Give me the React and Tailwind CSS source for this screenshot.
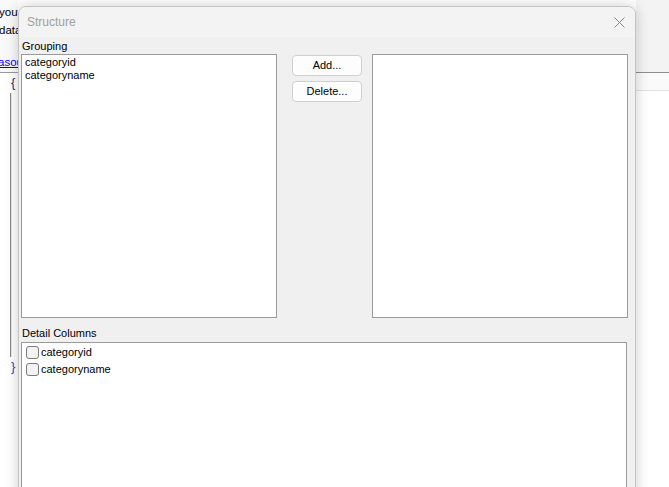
import React from 'react'

const font = { fontFamily: '"Liberation Sans", Arial, sans-serif' }

function ListBox({ className, children }) {
  return (
    <div className={`bg-white border border-[#9a9a9a] flex-shrink-0 ${className}`}>
      {children}
    </div>
  )
}

function Button({ children }) {
  return (
    <button className="w-[70px] h-[21px] rounded-[4px] border border-[#d0d0d0] bg-[#fdfdfd] text-[11px] leading-none text-black flex items-center justify-center">
      {children}
    </button>
  )
}

function Check({ label }) {
  return (
    <div className="h-[17px] flex items-center">
      <span className="w-[13px] h-[13px] rounded-[3px] border border-[#7a7a7a] bg-[#f3f3f3] flex-shrink-0" />
      <span className="ml-[2px] text-[11px] leading-none text-black">{label}</span>
    </div>
  )
}

function BackLeft() {
  return (
    <div className="w-[18px] flex-shrink-0 bg-white overflow-hidden text-[11.5px] text-black">
      <div className="h-[73px] border-b border-[#9a9a9a] bg-[#f9f9f9] pt-[3px] whitespace-nowrap">
        <div className="h-[18px] leading-[18px] -ml-[1px]">yout</div>
        <div className="h-[19px] leading-[19px] -ml-[1px]">data</div>
        <div className="h-[18px] leading-[18px] mt-[13px] -ml-[2px] text-[#0000ee] underline">asou</div>
      </div>
      <div className="pl-[11px] h-[20px] leading-[20px] text-[#1d2f6f] text-[13px]">{'{'}</div>
      <div className="ml-[10px] w-[2px] h-[264px] border-l border-[#8a8a8a] bg-[#e6e6e6]" />
      <div className="pl-[11px] h-[20px] leading-[20px] text-[#1f4fbf] text-[13px]">{'}'}</div>
    </div>
  )
}

function BackRight() {
  return (
    <div className="flex-1 bg-white">
      <div className="h-[73px] bg-[#f3f3f3] border-b border-[#8f8f8f]" />
      <div className="h-[18px] bg-[#fafafa] border-b border-[#e3e3e3]" />
    </div>
  )
}

export default function App() {
  return (
    <div className="w-[669px] h-[487px] overflow-hidden flex bg-white" style={font}>
      <BackLeft />
      <div className="relative z-10 w-[618px] h-[540px] mt-[6px] flex-shrink-0 flex flex-col rounded-t-[8px] border border-[#c4c4c4] bg-[#f0f0f0] shadow-[0_0_14px_rgba(0,0,0,0.2)] overflow-hidden">
        <div className="h-[30px] flex-shrink-0 bg-[#f3f3f3] flex items-center justify-between pl-[8px] pr-[10px]">
          <span className="text-[12px] text-[#a0a0a0]">Structure</span>
          <svg width="11" height="11" viewBox="0 0 11 11" fill="none" stroke="#8a8a8a" strokeWidth="1">
            <path d="M0.5 0.5 L10.5 10.5 M10.5 0.5 L0.5 10.5" />
          </svg>
        </div>
        <div className="flex-1 pl-[2px] pt-[3px] text-[11px] text-black">
          <div className="h-[13px] leading-[13px] mb-[1px] pl-[1px]">Grouping</div>
          <div className="flex">
            <ListBox className="w-[256px] h-[264px] pl-[3px] pt-[1px] leading-[13px]">
              <div>categoryid</div>
              <div>categoryname</div>
            </ListBox>
            <div className="ml-[15px] mt-[1px] flex flex-col gap-[5px]">
              <Button>Add...</Button>
              <Button>Delete...</Button>
            </div>
            <ListBox className="ml-[10px] w-[256px] h-[264px]" />
          </div>
          <div className="h-[13px] leading-[13px] mt-[9px] mb-[2px] pl-[1px]">Detail Columns</div>
          <ListBox className="w-[606px] h-[200px] pl-[4px] pt-[1px]">
            <Check label="categoryid" />
            <Check label="categoryname" />
          </ListBox>
        </div>
      </div>
      <BackRight />
    </div>
  )
}
